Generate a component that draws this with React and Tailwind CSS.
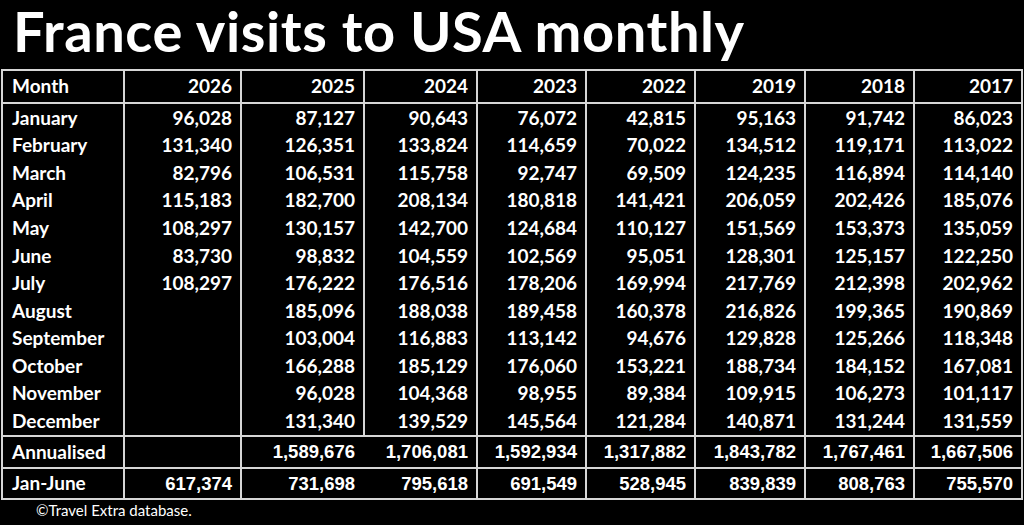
import React from "react";

const widths = ["w-[120px]", "w-[117px]", "w-[123px]", "w-[113px]", "w-[109px]", "w-[109px]", "w-[110px]", "w-[109px]", "w-[108px]"];
const years = ["2026", "2025", "2024", "2023", "2022", "2019", "2018", "2017"];

const months = [
  ["January", "96,028", "87,127", "90,643", "76,072", "42,815", "95,163", "91,742", "86,023"],
  ["February", "131,340", "126,351", "133,824", "114,659", "70,022", "134,512", "119,171", "113,022"],
  ["March", "82,796", "106,531", "115,758", "92,747", "69,509", "124,235", "116,894", "114,140"],
  ["April", "115,183", "182,700", "208,134", "180,818", "141,421", "206,059", "202,426", "185,076"],
  ["May", "108,297", "130,157", "142,700", "124,684", "110,127", "151,569", "153,373", "135,059"],
  ["June", "83,730", "98,832", "104,559", "102,569", "95,051", "128,301", "125,157", "122,250"],
  ["July", "108,297", "176,222", "176,516", "178,206", "169,994", "217,769", "212,398", "202,962"],
  ["August", "", "185,096", "188,038", "189,458", "160,378", "216,826", "199,365", "190,869"],
  ["September", "", "103,004", "116,883", "113,142", "94,676", "129,828", "125,266", "118,348"],
  ["October", "", "166,288", "185,129", "176,060", "153,221", "188,734", "184,152", "167,081"],
  ["November", "", "96,028", "104,368", "98,955", "89,384", "109,915", "106,273", "101,117"],
  ["December", "", "131,340", "139,529", "145,564", "121,284", "140,871", "131,244", "131,559"],
];

const annual = ["Annualised", "", "1,589,676", "1,706,081", "1,592,934", "1,317,882", "1,843,782", "1,767,461", "1,667,506"];
const janJune = ["Jan-June", "617,374", "731,698", "795,618", "691,549", "528,945", "839,839", "808,763", "755,570"];

const calibri = "font-['Lato','Carlito','Open_Sans',sans-serif]";
const arial = "font-['Liberation_Sans',Arial,sans-serif]";

function Row({ cells, height, bottom, bigRow }) {
  return (
    <div className={`flex ${height} ${bottom ? "border-b-2 border-[#d6d6d6]" : ""}`}>
      {cells.map((c, i) => {
        const isFirst = i === 0;
        const noLeft = isFirst || (bigRow && i === 3);
        return (
          <div
            key={i}
            className={`${widths[i]} flex items-center ${noLeft ? "" : "border-l-2 border-[#d6d6d6]"} ${
              isFirst ? "justify-start pl-[9px]" : "justify-end pr-[8px]"
            } ${bigRow && !isFirst ? `${arial} text-[18.5px]` : `${calibri} text-[19px]`} font-bold whitespace-nowrap`}
          >
            {c}
          </div>
        );
      })}
    </div>
  );
}

export default function App() {
  return (
    <div className="w-[1024px] h-[525px] bg-black text-white overflow-hidden">
      <div className="flex h-[69px] items-start pl-[13px]">
        <h1 className={`${calibri} text-[56px] font-bold leading-[62px] tracking-[0.6px] whitespace-nowrap`}>
          France visits to USA monthly
        </h1>
      </div>
      <div className="ml-[1px] w-[1022px] border-2 border-[#d6d6d6]">
        <Row cells={["Month", ...years]} height="h-[33px]" bottom />
        <div className="border-b-2 border-[#d6d6d6]">
          {months.map((m) => (
            <Row key={m[0]} cells={m} height="h-[27.6px]" />
          ))}
        </div>
        <Row cells={annual} height="h-[32px]" bottom bigRow />
        <Row cells={janJune} height="h-[29px]" bigRow />
      </div>
      <p className={`${calibri} pl-[36px] text-[15px] font-normal leading-[16px] pt-[2px]`}>©Travel Extra database.</p>
    </div>
  );
}
